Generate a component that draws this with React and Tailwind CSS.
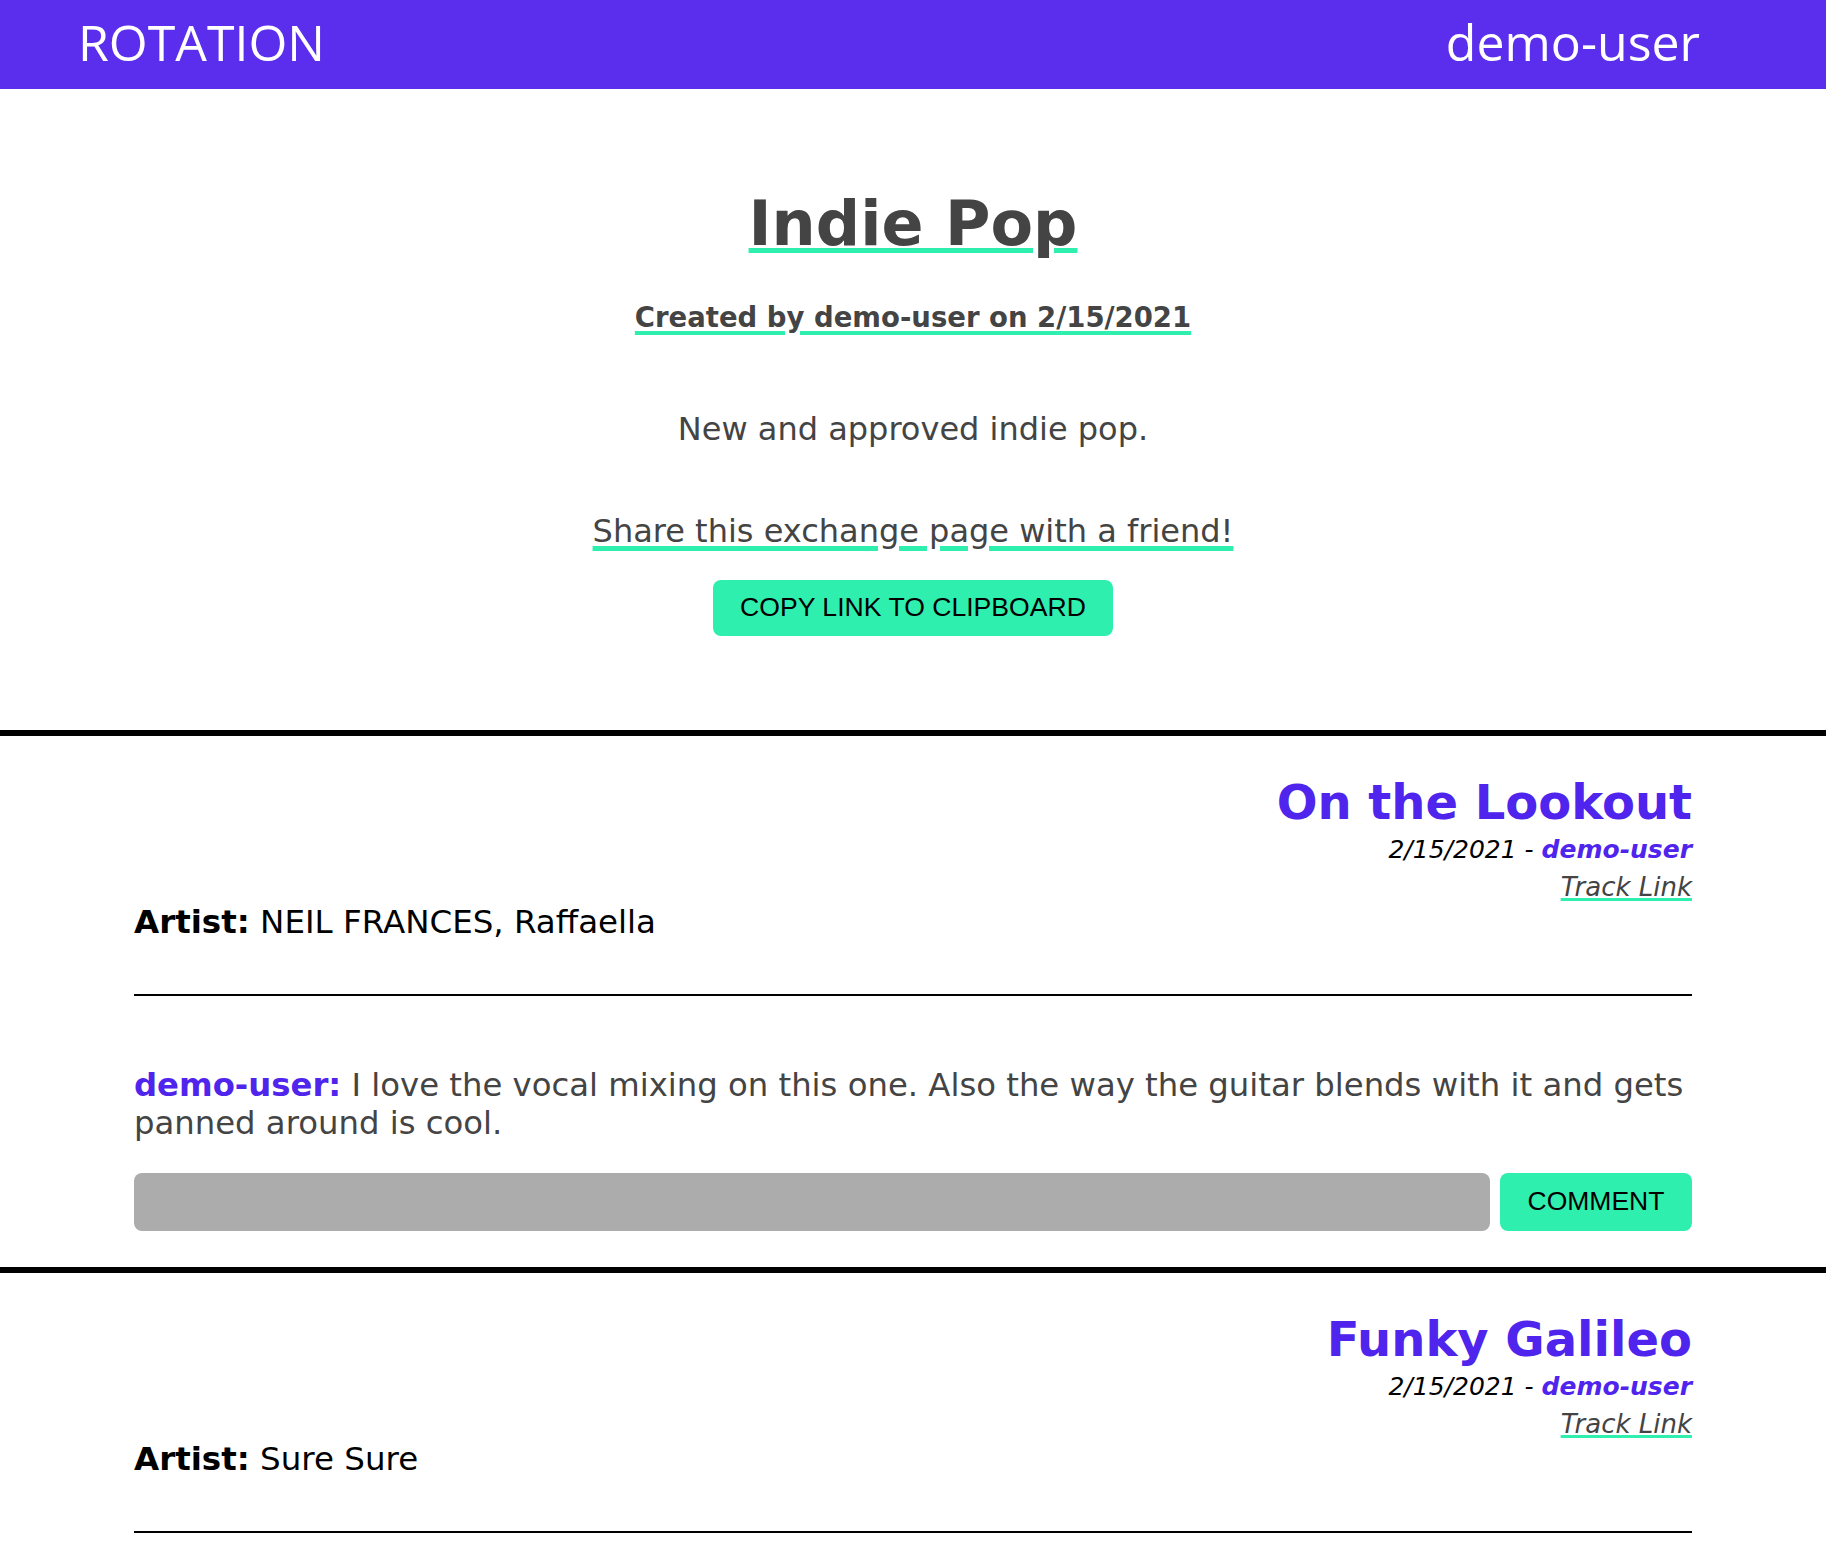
import React from 'react';

const tracks = [
    {
        title: 'On the Lookout',
        date: '2/15/2021',
        user: 'demo-user',
        artist: 'NEIL FRANCES, Raffaella',
        comments: [
            {
                user: 'demo-user',
                text: 'I love the vocal mixing on this one. Also the way the guitar blends with it and gets panned around is cool.',
            },
        ],
    },
    {
        title: 'Funky Galileo',
        date: '2/15/2021',
        user: 'demo-user',
        artist: 'Sure Sure',
        comments: [],
    },
];

function Track({ track }) {
    return (
        <div className="border-t-[6px] border-black">
            <div className="w-[1558px] mx-auto pt-[40px] pb-[36px]">
                <div className="text-right">
                    <h2 className="mb-[7px] text-[48px] leading-[52px] font-bold text-[#4f24ec]">{track.title}</h2>
                    <p className="text-[25px] leading-[30px] italic text-black">
                        {track.date} - <span className="font-bold text-[#4f24ec]">{track.user}</span>
                    </p>
                    <div className="mt-[7px]">
                        <a className="text-[26px] leading-[31px] italic text-[#444] underline decoration-[#2eefae] decoration-[3px] underline-offset-[2px]">
                            Track Link
                        </a>
                    </div>
                </div>
                <p className="text-[32.5px] leading-[38px] text-black">
                    <span className="font-bold">Artist:</span> {track.artist}
                </p>
                <div className="mt-[53px] h-[2px] bg-black" />

                <div className="mt-[70px] flex flex-col gap-[20px]">
                    {track.comments.map((c, i) => (
                        <p key={i} className="text-[32.3px] leading-[38px] text-[#444]">
                            <span className="font-bold text-[#4f24ec]">{c.user}:</span> {c.text}
                        </p>
                    ))}
                </div>

                <div className={track.comments.length ? 'mt-[31px] flex gap-[10px]' : 'flex gap-[10px]'}>
                    <input className="flex-1 h-[58px] rounded-[8px] bg-[#acacac] outline-none px-4 text-[26px]" />
                    <button className="w-[192px] h-[58px] rounded-[8px] bg-[#2eefae] text-black text-[26.5px] font-['Liberation_Sans',Arial,sans-serif]">
                        COMMENT
                    </button>
                </div>
            </div>
        </div>
    );
}

export default function App() {
    return (
        <div className="min-h-screen bg-white font-['DejaVu_Sans',Verdana,sans-serif]">
            <header className="h-[89px] bg-[#5b2dec] text-white flex items-center justify-between pl-[78px] pr-[126px] pb-[5px] font-['Open_Sans',sans-serif] text-[50px] leading-[50px]">
                <span>ROTATION</span>
                <span>demo-user</span>
            </header>

            <section className="text-center text-[#444] pb-[94px]">
                <h1 className="pt-[99px] text-[62px] leading-[72px] font-bold">
                    <span className="underline decoration-[#2eefae] decoration-[5px] underline-offset-[3px]">Indie Pop</span>
                </h1>
                <p className="mt-[41px] text-[27.5px] leading-[32px] font-bold">
                    <span className="underline decoration-[#2eefae] decoration-[4px] underline-offset-[4px]">
                        Created by demo-user on 2/15/2021
                    </span>
                </p>
                <p className="mt-[77px] text-[32px] leading-[38px]">New and approved indie pop.</p>
                <p className="mt-[64px] text-[32px] leading-[38px]">
                    <a className="underline decoration-[#2eefae] decoration-[5px] underline-offset-[4px]">
                        Share this exchange page with a friend!
                    </a>
                </p>
                <button className="mt-[30px] h-[56px] px-[27px] rounded-[8px] bg-[#2eefae] text-black text-[26.6px] font-['Liberation_Sans',Arial,sans-serif]">
                    COPY LINK TO CLIPBOARD
                </button>
            </section>

            {tracks.map((t) => (
                <Track key={t.title} track={t} />
            ))}
        </div>
    );
}
